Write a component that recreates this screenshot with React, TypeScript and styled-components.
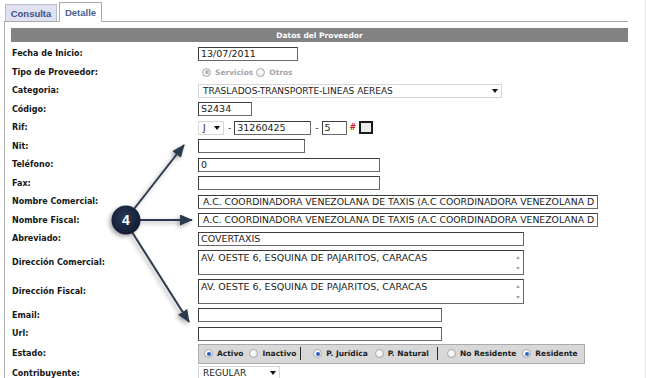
import React from "react";
import styled, { createGlobalStyle } from "styled-components";

const GlobalStyle = createGlobalStyle`
  html, body {
    margin: 0;
    padding: 0;
    background: #ffffff;
  }
  body {
    font-family: "DejaVu Sans", Verdana, sans-serif;
  }
`;

const Page = styled.div`
  position: relative;
  width: 646px;
  height: 378px;
  overflow: hidden;
  padding-top: 3px;
  box-sizing: border-box;
  border-right: 1px solid #e4e4e4;
`;

const TabBar = styled.div`
  display: flex;
  align-items: flex-end;
  gap: 2px;
  margin-left: 4px;
  width: 624px;
  height: 19px;
  padding-left: 1px;
  box-sizing: border-box;
  border-bottom: 1px solid #a9a9a9;
`;

const Tab = styled.div<{ $active?: boolean }>`
  display: flex;
  align-items: center;
  justify-content: center;
  box-sizing: border-box;
  height: ${(p) => (p.$active ? "20px" : "17px")};
  width: ${(p) => (p.$active ? "43px" : "52px")};
  margin-bottom: ${(p) => (p.$active ? "-1px" : "0")};
  border: 1px solid ${(p) => (p.$active ? "#a9a9a9" : "#b9bccb")};
  border-bottom: ${(p) => (p.$active ? "1px solid #ffffff" : "none")};
  background: ${(p) => (p.$active ? "#ffffff" : "#dfe1f0")};
  color: ${(p) => (p.$active ? "#4b6191" : "#3e5089")};
  font-family: "Liberation Sans", Arial, sans-serif;
  font-weight: 700;
  font-size: 9.5px;
`;

const Panel = styled.div`
  margin-left: 4px;
  width: 624px;
  height: 360px;
  box-sizing: border-box;
  border-left: 1px solid #b0b0b0;
  padding: 6px 0 0 6px;
`;

const Header = styled.div`
  height: 14px;
  margin-bottom: 2.5px;
  background: #828282;
  color: #ffffff;
  font-weight: 700;
  font-size: 7.5px;
  display: flex;
  align-items: center;
  justify-content: center;
`;

const Row = styled.div<{ $h?: number }>`
  display: grid;
  grid-template-columns: 187px 1fr;
  align-items: center;
  height: ${(p) => p.$h ?? 18.5}px;
`;

const Label = styled.div`
  font-size: 8px;
  font-weight: 700;
  color: #161616;
  padding-left: 1px;
  white-space: nowrap;
`;

const Field = styled.div`
  display: flex;
  align-items: center;
`;

const Box = styled.div<{ $w: number }>`
  width: ${(p) => p.$w}px;
  height: 14px;
  box-sizing: border-box;
  border: 1px solid #3c3c3c;
  border-right-color: #6a6a6a;
  border-bottom-color: #6a6a6a;
  background: #ffffff;
  font-size: 9.5px;
  line-height: 12px;
  color: #1a1a1a;
  padding: 0 2px;
  white-space: nowrap;
  overflow: hidden;
`;

const WideBox = styled(Box)`
  padding-left: 4px;
  font-size: 9.3px;
`;

const Select = styled.div<{ $w: number }>`
  width: ${(p) => p.$w}px;
  height: 14px;
  box-sizing: border-box;
  border: 1px solid #d6d6d6;
  background: #ffffff;
  display: flex;
  align-items: center;
  justify-content: space-between;
  padding: 0 3px 0 4px;
  font-size: 9px;
  color: #1a1a1a;
  white-space: nowrap;
`;

const Caret = styled.span`
  width: 0;
  height: 0;
  border-left: 3px solid transparent;
  border-right: 3px solid transparent;
  border-top: 4px solid #111;
`;

const Area = styled.div`
  width: 326px;
  height: 25px;
  box-sizing: border-box;
  border: 1px solid #3c3c3c;
  border-right-color: #6a6a6a;
  border-bottom-color: #6a6a6a;
  display: flex;
  font-size: 9.5px;
  color: #1a1a1a;
`;

const AreaText = styled.div`
  flex: 1;
  padding: 1px 2px;
  line-height: 11px;
  white-space: nowrap;
`;

const ScrollCol = styled.div`
  width: 11px;
  display: flex;
  flex-direction: column;
  align-items: center;
  justify-content: space-between;
  padding: 5px 0 4px;
`;

const Arrow = styled.span<{ $up?: boolean }>`
  width: 0;
  height: 0;
  border-left: 2.5px solid transparent;
  border-right: 2.5px solid transparent;
  ${(p) =>
    p.$up ? "border-bottom: 3px solid #a8a8a8;" : "border-top: 3px solid #a8a8a8;"}
`;

const Dash = styled.span`
  font-size: 9px;
  color: #222;
  margin: 0 3px 0 4px;
`;

const Mark = styled.span`
  color: #d61e1e;
  font-size: 8px;
  font-weight: 700;
  font-style: italic;
  margin: 0 4px 0 3px;
`;

const Check = styled.span`
  width: 14px;
  height: 13px;
  box-sizing: border-box;
  border: 2px solid #1b1b1b;
  background: #ececec;
`;

const Radio = styled.span<{ $on?: boolean; $off?: boolean }>`
  position: relative;
  display: inline-block;
  width: 9px;
  height: 9px;
  box-sizing: border-box;
  border-radius: 50%;
  border: 1px solid #a9a9a9;
  background: radial-gradient(circle at 40% 35%, #ffffff 0%, #e4e4e4 100%);
  &::after {
    content: "";
    display: ${(p) => (p.$on ? "block" : "none")};
    position: absolute;
    left: 1.5px;
    top: 1.5px;
    width: 4px;
    height: 4px;
    border-radius: 50%;
    background: ${(p) => (p.$off ? "#b5b5b5" : "#2f62c4")};
  }
`;

const Option = styled.span<{ $muted?: boolean; $ml?: number }>`
  display: inline-flex;
  align-items: center;
  gap: 4px;
  margin-left: ${(p) => p.$ml ?? 0}px;
  font-size: 7.5px;
  font-weight: 700;
  color: ${(p) => (p.$muted ? "#a5a5a5" : "#1d1d1d")};
  white-space: nowrap;
`;

const Bar = styled.div`
  width: 387px;
  height: 20px;
  box-sizing: border-box;
  background: #d8d8d8;
  border: 1px solid #aaaaaa;
  display: flex;
  align-items: center;
  padding-left: 5px;
`;

const Sep = styled.span<{ $ml: number; $mr: number }>`
  width: 1px;
  height: 13px;
  background: #2a2a2a;
  margin: 0 ${(p) => p.$mr}px 0 ${(p) => p.$ml}px;
`;

const Callout = styled.svg`
  position: absolute;
  left: 0;
  top: 0;
  pointer-events: none;
`;

const NOMBRE =
  "A.C. COORDINADORA VENEZOLANA DE TAXIS (A.C COORDINADORA VENEZOLANA D";
const DIRECCION = "AV. OESTE 6, ESQUINA DE PAJARITOS, CARACAS";

export default function App() {
  return (
    <Page>
      <GlobalStyle />
      <TabBar>
        <Tab>Consulta</Tab>
        <Tab $active>Detalle</Tab>
      </TabBar>
      <Panel>
        <Header>Datos del Proveedor</Header>
        <Row>
          <Label>Fecha de Inicio:</Label>
          <Field>
            <Box $w={100}>13/07/2011</Box>
          </Field>
        </Row>
        <Row>
          <Label>Tipo de Proveedor:</Label>
          <Field>
            <Option $muted $ml={4}>
              <Radio $on $off />
              Servicios
            </Option>
            <Option $muted $ml={3}>
              <Radio />
              Otros
            </Option>
          </Field>
        </Row>
        <Row>
          <Label>Categoria:</Label>
          <Field>
            <Select $w={304}>
              TRASLADOS-TRANSPORTE-LINEAS AEREAS
              <Caret />
            </Select>
          </Field>
        </Row>
        <Row>
          <Label>Código:</Label>
          <Field>
            <Box $w={54}>S2434</Box>
          </Field>
        </Row>
        <Row>
          <Label>Rif:</Label>
          <Field>
            <Select $w={26}>
              J
              <Caret />
            </Select>
            <Dash>-</Dash>
            <Box $w={77}>31260425</Box>
            <Dash>-</Dash>
            <Box $w={25}>5</Box>
            <Mark>#</Mark>
            <Check />
          </Field>
        </Row>
        <Row>
          <Label>Nit:</Label>
          <Field>
            <Box $w={107} />
          </Field>
        </Row>
        <Row>
          <Label>Teléfono:</Label>
          <Field>
            <Box $w={182}>0</Box>
          </Field>
        </Row>
        <Row>
          <Label>Fax:</Label>
          <Field>
            <Box $w={182} />
          </Field>
        </Row>
        <Row>
          <Label>Nombre Comercial:</Label>
          <Field>
            <WideBox $w={400}>{NOMBRE}</WideBox>
          </Field>
        </Row>
        <Row>
          <Label>Nombre Fiscal:</Label>
          <Field>
            <WideBox $w={400}>{NOMBRE}</WideBox>
          </Field>
        </Row>
        <Row>
          <Label>Abreviado:</Label>
          <Field>
            <Box $w={326}>COVERTAXIS</Box>
          </Field>
        </Row>
        <Row $h={29}>
          <Label>Dirección Comercial:</Label>
          <Field>
            <Area>
              <AreaText>{DIRECCION}</AreaText>
              <ScrollCol>
                <Arrow $up />
                <Arrow />
              </ScrollCol>
            </Area>
          </Field>
        </Row>
        <Row $h={29}>
          <Label>Dirección Fiscal:</Label>
          <Field>
            <Area>
              <AreaText>{DIRECCION}</AreaText>
              <ScrollCol>
                <Arrow $up />
                <Arrow />
              </ScrollCol>
            </Area>
          </Field>
        </Row>
        <Row>
          <Label>Email:</Label>
          <Field>
            <Box $w={244} />
          </Field>
        </Row>
        <Row>
          <Label>Url:</Label>
          <Field>
            <Box $w={244} />
          </Field>
        </Row>
        <Row $h={21}>
          <Label>Estado:</Label>
          <Field>
            <Bar>
              <Option>
                <Radio $on />
                Activo
              </Option>
              <Option $ml={6}>
                <Radio />
                Inactivo
              </Option>
              <Sep $ml={4} $mr={12} />
              <Option>
                <Radio $on />
                P. Jurídica
              </Option>
              <Option $ml={7}>
                <Radio />
                P. Natural
              </Option>
              <Sep $ml={8} $mr={9} />
              <Option>
                <Radio />
                No Residente
              </Option>
              <Option $ml={6}>
                <Radio $on />
                Residente
              </Option>
            </Bar>
          </Field>
        </Row>
        <Row>
          <Label>Contribuyente:</Label>
          <Field>
            <Select $w={82}>
              REGULAR
              <Caret />
            </Select>
          </Field>
        </Row>
      </Panel>

      <Callout width="646" height="378" viewBox="0 0 646 378">
        <defs>
          <marker
            id="head"
            markerUnits="userSpaceOnUse"
            markerWidth="13"
            markerHeight="11"
            refX="12"
            refY="5.5"
            orient="auto"
          >
            <path d="M0,0 L13,5.5 L0,11 Z" fill="#2c3a4f" />
          </marker>
          <filter id="shade" x="-30%" y="-30%" width="160%" height="160%">
            <feDropShadow dx="-2" dy="2" stdDeviation="2" floodColor="#000" floodOpacity="0.35" />
          </filter>
          <radialGradient id="ball" cx="45%" cy="40%" r="60%">
            <stop offset="0%" stopColor="#2a3a58" />
            <stop offset="100%" stopColor="#121c30" />
          </radialGradient>
        </defs>
        <g filter="url(#shade)" stroke="#2c3a4f" strokeWidth="2" fill="none">
          <line x1="134" y1="209" x2="184" y2="145" markerEnd="url(#head)" />
          <line x1="139" y1="220" x2="192" y2="220" markerEnd="url(#head)" />
          <line x1="132" y1="232" x2="189" y2="322" markerEnd="url(#head)" />
        </g>
        <g filter="url(#shade)">
          <circle cx="126" cy="220" r="14.5" fill="url(#ball)" />
        </g>
        <text
          x="126"
          y="225"
          textAnchor="middle"
          fill="#ffffff"
          fontFamily="Liberation Sans, Arial, sans-serif"
          fontWeight="700"
          fontSize="14"
        >
          4
        </text>
      </Callout>
    </Page>
  );
}
